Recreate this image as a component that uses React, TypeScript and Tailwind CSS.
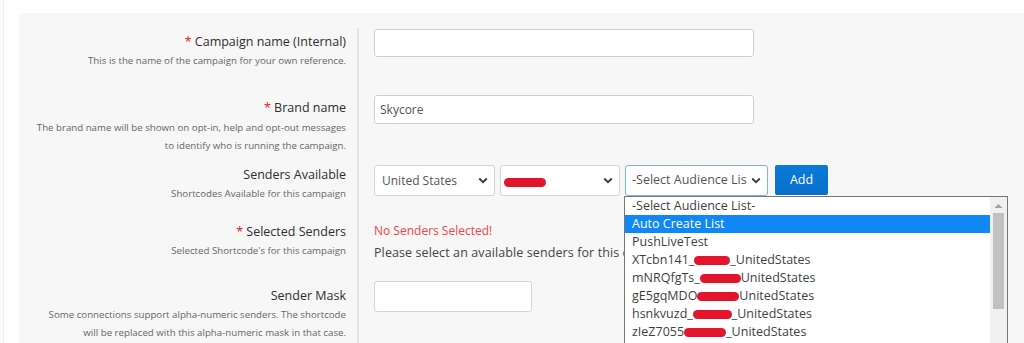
import React from "react";

const Chevron = () => (
  <svg width="10" height="7" viewBox="0 0 10 7" className="shrink-0">
    <path d="M1.2 1.5 L5 5.2 L8.8 1.5" fill="none" stroke="#3c3c3c" strokeWidth="1.9" />
  </svg>
);

const Red = ({ w }: { w: number }) => (
  <span
    className="inline-block h-[9px] rounded-full bg-[#e2152c] align-middle"
    style={{ width: w }}
  />
);

export default function App() {
  const items: { pre: string; w: number; post: string }[] = [
    { pre: "XTcbn141_", w: 36, post: "_UnitedStates" },
    { pre: "mNRQfgTs_", w: 41, post: "UnitedStates" },
    { pre: "gE5gqMDO", w: 42, post: "UnitedStates" },
    { pre: "hsnkvuzd_", w: 39, post: "_UnitedStates" },
    { pre: "zIeZ7055", w: 42, post: "_UnitedStates" },
  ];
  return (
    <div className="relative h-[343px] w-full overflow-hidden bg-white font-['Open_Sans',sans-serif]">
      <div className="ml-[3px] h-full border-l border-[#eef0f6] pl-[15px] pt-[13px]">
        <div className="h-full rounded-tl-[4px] bg-[#f7f7f7] pt-[15px]">
          {/* Row 1 */}
          <div className="flex h-[66px]">
            <div className="w-[338px] shrink-0 pr-[11px] pt-[5px] text-right">
              <div className="text-[12.5px] leading-[18px] text-[#2e2e2e]">
                <span className="text-[#e8141a]">*</span> Campaign name (Internal)
              </div>
              <div className="mt-[1px] text-[9.7px] leading-[18px] text-[#666]">
                This is the name of the campaign for your own reference.
              </div>
            </div>
            <div className="flex-1 border-l-2 border-[#e3e3e3] pl-[15px]">
              <div className="mt-[1px] h-[28px] w-[380px] rounded-[3px] border border-[#cfcfcf] bg-white" />
            </div>
          </div>
          {/* Row 2 */}
          <div className="flex h-[70px]">
            <div className="w-[338px] shrink-0 pr-[11px] pt-[5px] text-right">
              <div className="text-[12.5px] leading-[18px] text-[#2e2e2e]">
                <span className="text-[#e8141a]">*</span> Brand name
              </div>
              <div className="mt-[2px] text-[9.7px] leading-[18px] text-[#666]">
                The brand name will be shown on opt-in, help and opt-out messages
                <br />
                to identify who is running the campaign.
              </div>
            </div>
            <div className="flex-1 border-l-2 border-[#e3e3e3] pl-[15px]">
              <div className="mt-[1px] flex h-[29px] w-[380px] items-center rounded-[3px] border border-[#cfcfcf] bg-white px-[5px] text-[12px] text-[#555]">
                Skycore
              </div>
            </div>
          </div>
          {/* Row 3 */}
          <div className="flex h-[56px]">
            <div className="w-[338px] shrink-0 pr-[11px] pt-[2px] text-right">
              <div className="text-[12.5px] leading-[18px] text-[#2e2e2e]">Senders Available</div>
              <div className="mt-[1px] text-[9.7px] leading-[18px] text-[#666]">
                Shortcodes Available for this campaign
              </div>
            </div>
            <div className="flex flex-1 items-start gap-[5px] border-l-2 border-[#e3e3e3] pl-[15px]">
              <div className="mt-[1px] flex h-[31px] w-[121px] items-center justify-between rounded-[3px] border border-[#d4d4d4] bg-white pl-[7px] pr-[6px] text-[12px] text-[#555]">
                <span>United States</span>
                <Chevron />
              </div>
              <div className="mt-[1px] flex h-[31px] w-[120px] items-center justify-between rounded-[3px] border border-[#d4d4d4] bg-white pl-[3px] pr-[6px]">
                <span className="mt-[3px] h-[9px] w-[42px] rounded-full bg-[#e2152c]" />
                <Chevron />
              </div>
              <div className="mt-[1px] flex h-[31px] w-[143px] items-center justify-between overflow-hidden rounded-[3px] border border-[#7fb5e6] bg-white pl-[6px] pr-[6px] text-[12.5px] text-[#555]">
                <span className="w-[115px] overflow-hidden whitespace-nowrap">-Select Audience List-</span>
                <Chevron />
              </div>
              <div className="ml-[2px] mt-[1px] flex h-[30px] w-[53px] items-center justify-center rounded-[2px] bg-gradient-to-b from-[#0b7ad9] to-[#0a6fcb] text-[12.5px] text-white">
                Add
              </div>
            </div>
          </div>
          {/* Row 4 */}
          <div className="flex h-[60px]">
            <div className="w-[338px] shrink-0 pr-[11px] pt-[3px] text-right">
              <div className="text-[12.5px] leading-[18px] text-[#2e2e2e]">
                <span className="text-[#e8141a]">*</span> Selected Senders
              </div>
              <div className="mt-[1px] text-[9.7px] leading-[18px] text-[#666]">
                Selected Shortcode's for this campaign
              </div>
            </div>
            <div className="flex-1 border-l-2 border-[#e3e3e3] pl-[15px] pt-[2px]">
              <div className="text-[12px] leading-[18px] text-[#f2434b]">No Senders Selected!</div>
              <div className="mt-[4px] whitespace-nowrap text-[12.5px] leading-[18px] tracking-[0.1px] text-[#444]">
                Please select an available senders for this campaign.
              </div>
            </div>
          </div>
          {/* Row 5 */}
          <div className="flex h-[80px]">
            <div className="w-[338px] shrink-0 pr-[11px] pt-[7px] text-right">
              <div className="text-[12.5px] leading-[18px] text-[#2e2e2e]">Sender Mask</div>
              <div className="mt-[1px] text-[9.7px] leading-[18px] text-[#666]">
                Some connections support alpha-numeric senders. The shortcode
                <br />
                will be replaced with this alpha-numeric mask in that case.
              </div>
            </div>
            <div className="flex-1 border-l-2 border-[#e3e3e3] pl-[15px]">
              <div className="mt-[1px] h-[31px] w-[158px] rounded-[3px] border border-[#d4d4d4] bg-white" />
            </div>
          </div>
        </div>
      </div>

      {/* Open select popup */}
      <div className="absolute left-[624px] top-[196px] flex h-[170px] w-[384px] border border-[#767676] bg-white text-[12.5px] leading-[18px] text-[#3f3f3f]">
        <div className="flex-1">
          <div className="px-[7px]">-Select Audience List-</div>
          <div className="bg-[#0f88f5] px-[7px] text-white">Auto Create List</div>
          <div className="px-[7px]">PushLiveTest</div>
          {items.map((it) => (
            <div key={it.pre} className="flex items-center whitespace-nowrap px-[7px]">
              <span>{it.pre}</span>
              <Red w={it.w} />
              <span>{it.post}</span>
            </div>
          ))}
        </div>
        <div className="flex w-[17px] flex-col items-center bg-[#f0f0f0]">
          <svg width="9" height="6" viewBox="0 0 9 6" className="mt-[6px]">
            <path d="M0.5 5 L4.5 1 L8.5 5 Z" fill="#a3a3a3" />
          </svg>
          <div className="mt-[4px] h-[96px] w-[11px] bg-[#c1c1c1]" />
        </div>
      </div>
    </div>
  );
}
